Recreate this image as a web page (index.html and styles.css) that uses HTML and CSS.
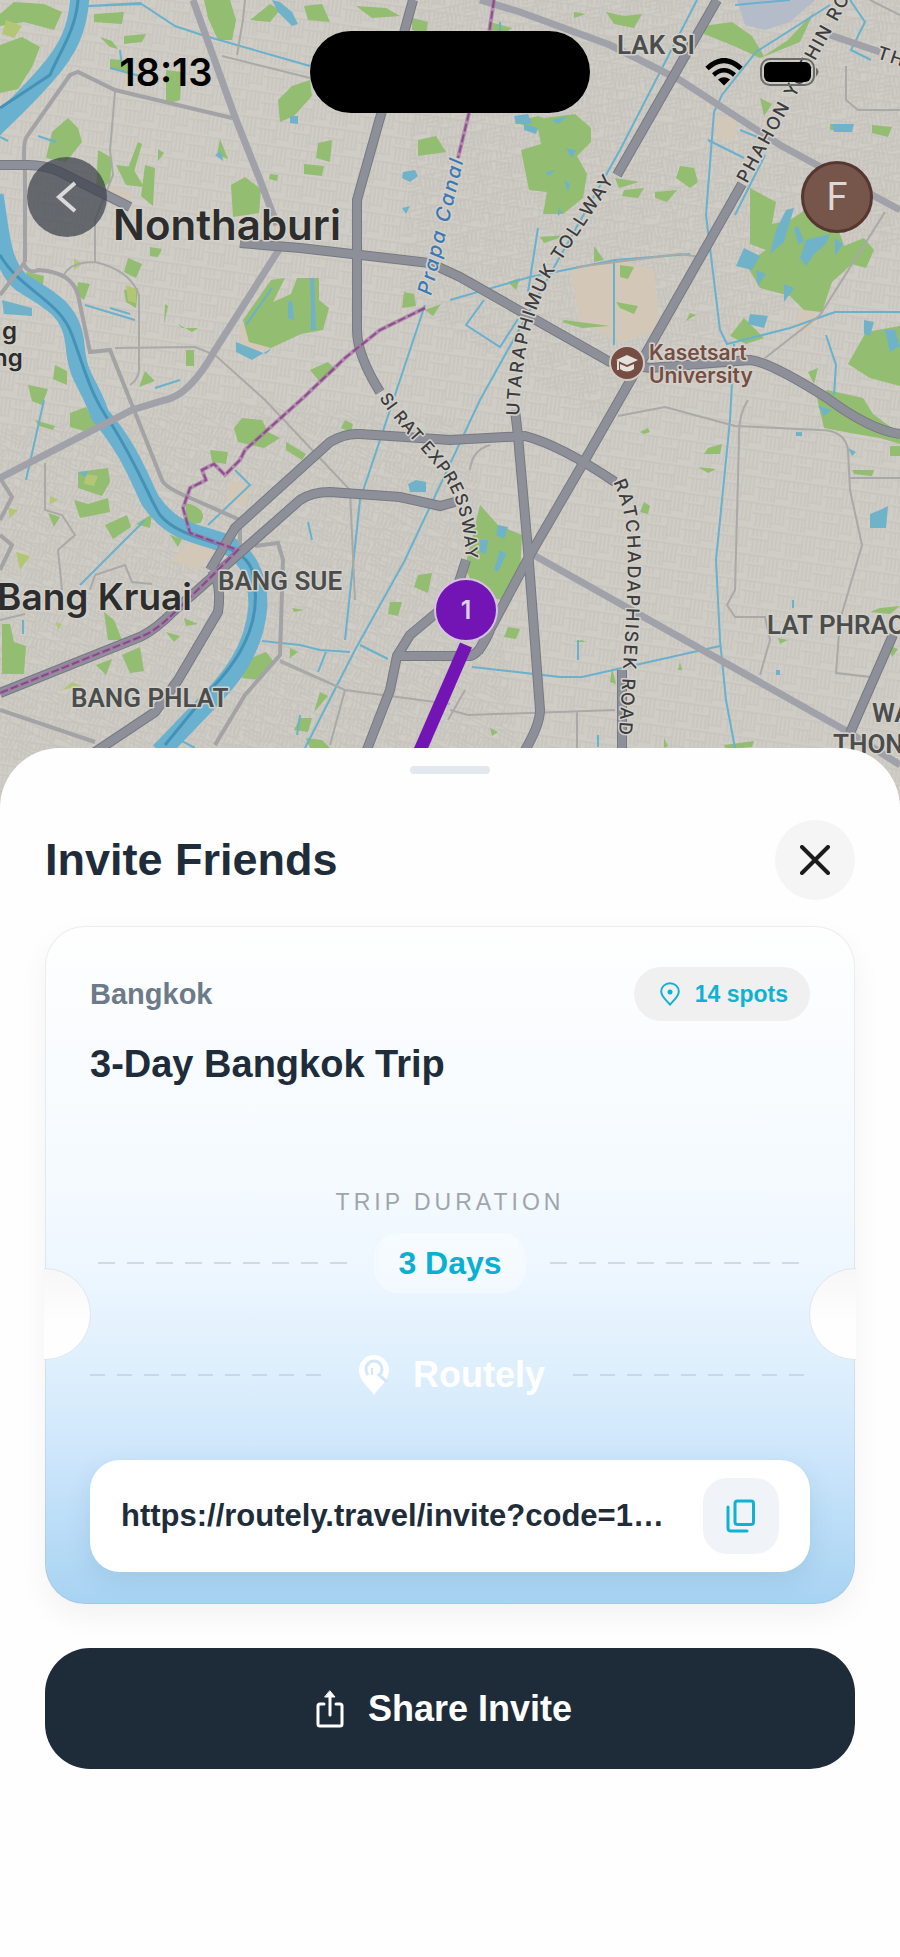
FILE: index.html
```html
<!DOCTYPE html>
<html lang="en">
<head>
    <meta charset="UTF-8">
    <meta name="viewport" content="width=device-width, initial-scale=1.0">
    <title>Routely - Invite Friends</title>
    <link rel="stylesheet" href="styles.css">
</head>
<body>
    <header class="map">
        <svg class="map-canvas" viewBox="0 0 900 830" preserveAspectRatio="xMidYMin slice" aria-label="Map of Bangkok">
            <defs>
                <!-- small streets -->
                <pattern id="streets-a" width="34" height="26" patternUnits="userSpaceOnUse" patternTransform="rotate(8)">
                    <path d="M0 3H34M0 13H20M20 3V26M5 13V26M9 13V26M13 13V26M17 13V26M24 3V20M28 3V20M32 3V20M20 21H34M4 3V10M8 3V10M12 3V10"/>
                </pattern>
                <pattern id="streets-b" width="30" height="32" patternUnits="userSpaceOnUse" patternTransform="rotate(-12)">
                    <path d="M0 4H30M14 4V32M0 9H14M0 13H14M0 17H14M0 21H14M14 26H30M18 4V22M22 4V22M26 4V22M4 24V32M8 24V32"/>
                </pattern>
                <pattern id="streets-c" width="32" height="30" patternUnits="userSpaceOnUse" patternTransform="rotate(28)">
                    <path d="M0 2H32M10 2V30M10 16H32M2 6V28M6 6V28M14 6V16M18 2V12M22 6V16M26 2V12M14 20H32M14 24H32"/>
                </pattern>
                <path id="tollway-path" d="M519 416C522 345 534 310 552 275L622 168"/>
                <path id="phahon-path" d="M747 184L870 -38"/>
                <path id="sirat-path" d="M379 398C400 430 425 450 444 478C460 503 464 525 466 562"/>
                <path id="ratcha-path" d="M613 482C632 520 628 560 626 620L618 752"/>
                <path id="prapa-path" d="M431 296L468 142"/>
            </defs>
            <rect class="land" width="900" height="830"/>
            <g class="streets">
                <rect width="900" height="830" fill="url(#streets-a)"/>
                <path d="M420 0H900V240L600 420L400 300Z" fill="url(#streets-b)"/>
                <path d="M0 430L230 400L470 420L520 760H0Z" fill="url(#streets-c)"/>
            </g>
            <path class="sand" d="M110 185l22 8-4 14-18-4zM240 325l30-30 20 6-10 45-38 8zM230 480l20 5-4 22-20-8zM170 560l20-18 28 6-20 22zM570 270l50-10 34 10 6 60-40 12-40-20zM715 115l22 4-3 22-18-4zM800 300l18 4-8 30-14-6z"/>
            <path class="lake" d="M737 0H815L790 22L765 30L745 25Z"/>
            <g class="green">
                <path d="M0 45l22-8 18 10-8 20-14 22-18 4zM0 14l14-12 30 2 18 8-8 18-30-8-24 4zM94 14l30-2-2 12-28-2zM100 37l12 4 6 8-8-2zM110 59l22 2-4 12-18-4zM124 36l22-2-4 8-18 2zM166 70l16 2-2 28-14 4z"/>
                <path d="M204 0h26l6 20-4 20-14 0-10-22zM250 20l20-16 10 6-10 12zM304 6l18-2 8 18-22-2zM356 6l30 2 14 8-28 2zM412 18l16 4-2 12-14-4zM278 100l14-14 18-6 2 16-18 20-14 6zM318 143l14-3-2 22-14-4zM304 164l20 2-2 10-18-2zM418 140l18-4 10 16-28 4zM270 174l8 1-1 6-8-2z"/>
                <path d="M52 132l16-14 10 10 4 14-16 20-20-4zM98 150l14 8-2 24-14 12zM116 165l16 2 12 20-18-2zM138 142l4 2-8 28-6-4zM145 165l10 3-2 38-12-10zM158 149l6 4-6 8zM217 155l3-16 8 20zM231 185l14-8 16 12-2 24-26 4zM150 247l12 2-4 8-8-1zM128 258l14 6-6 14-12-6zM26 272l18 4-2 16-14-6zM78 282l12 2-6 16-8-6zM124 290l14-2-2 20-10-6z"/>
                <path d="M243 320l28-40 14-2-12 24 18-8 6-16h22v22l10 8-6 22-22 4-30 14-22-6zM186 350h8v16h-8zM145 371l10 10-16 6zM404 292l10 2 2 12-14 2zM178 324l4 4 16 0-6 4zM165 304l3 2-4 18zM310 370l18-8 8 8-16 12zM425 310l16-6-8 12zM28 385l20 4-6 16-10-4zM55 365l12 6 0 14-14-6z"/>
                <path d="M70 413l16-6 10 18-12 6-14-4zM35 420l20 6-2 4-14-4zM234 428l8-10 20 2 6 12 12 6-16 10-26-6zM210 450l18 2-2 12-14-2zM286 442l20 12-4 6-16-10zM78 472l30-4 2 14-8 14-24-8zM74 500l14 4 20-6 2 14-30 6zM105 525l22-10 4 12-18 12zM186 503c18 4 20 14 14 20l-14 2zM136 524l16-10-2 14zM48 513l12 4-6 10zM345 420l8 4-2 8-10-4zM170 535l12 4-4 8z"/>
                <path d="M2 624l8 0 4 18 12 4-2 28-22 0zM104 612l10 8 8 20-14 0zM122 655l18-8 4 24-14 2zM96 665l16-6-6 16zM184 618l14 6-12 2zM166 632l14 4-6 6zM246 660l20-8 8 10-14 18-18-2zM290 648l8 4-8 6zM320 692l8 4-14 16zM300 718l12 0-4 14-14-2zM418 575l14-2-4 20-14-6zM390 602l12 0-4 14-10-2zM292 608l12 2-10 2zM306 738l16 2 8 8-20 0z"/>
                <path d="M480 505l18 20 24 10-2 40-18 25-25-5-12-28zM545 118l30-4 16 14 0 14-14 14 10 18-4 24-20 16-20 0 4-22-18-2-8-40 20-6-4-20zM514 122l24-6 16 6-10 10zM606 12l18 4 18-2-8 14-20-4zM490 22l22 6-6 4-16-2zM574 12l12 2-12 4z"/>
                <path d="M680 166l14 2 4 14-8 6-14-10zM615 178l24 4-20 6zM624 190l20-2-6 10-16-2zM655 192l22-2-10 12-12-4zM594 246l10 14-10 2zM620 265l14 2-6 12-8-2zM540 237l28-2-24 8zM564 320l46 6-28 2-20-6zM616 302l22 4-4 8-14-6zM730 336l14-18 20 20-18 6zM690 313l6 2-10 6zM508 282l12-4-4 12z"/>
                <path d="M704 26l28-4 20 14 12 20 24-16 26-28-14 30-40 16-26-12-30-12zM760 98l12 6-8 12zM872 125l20 2-4 10-16-4zM830 124l20 0 2 6-22 0z"/>
                <path d="M750 188l26 14-4 22 18-4 24-16 10 12 12 6 8 24 20-8 10 12-8 18-14-4-20 18-10 30-18-2-14-14-30-8-14-24 20-14-16-6z"/>
                <path d="M866 332l34-6v60l-30-8-22-14zM808 372l10-4-4 16zM817 398l10-8 36 8 10 16 27 20v10l-20-6-24-4-32-6zM640 432l8-4 2 4-6 2zM708 448l14-4-2 10-16 0zM698 467l18 2-8 4zM644 502l6 4-2 8-8-2zM890 446h10v10h-10zM852 470l22 0-2 6-18-2z"/>
                <path d="M508 627l12 2-4 10-12-2zM582 640l4 2-12 0zM612 668l4 16-6-2zM880 608l20-2-10 8-20-2zM778 638l10 2-8 4zM888 645l10 4-6 8zM724 745l30-4-2 6-26 2zM490 728l8 4-6 4zM664 738l4 8-4 2zM680 662l2 8-4 0z"/>
            </g>
            <g class="olive">
                <path d="M6 20l16 6-8 12-12-4zM74 258l8 6-8 6zM126 285l10 4 0 14-8-2zM86 474l12 2-4 10-10-2zM16 552l14 4-10 14zM50 496l8 4-8 4zM72 682l10 4-20 4zM56 622l6 2-4 6zM8 508l10 2-8 8z"/>
            </g>
            <!-- canals and ponds -->
            <g class="canal">
                <path d="M88 6L140 3L175 26L202 35L310 66M120 50l2 16M110 68l30 8M38 136l18 6M0 137l8 4M90 6l52-2"/>
                <path d="M697 0L620 150L530 310L480 400L405 560L355 650L305 748"/>
                <path d="M735 5L790 0M830 5L756 52L722 95L714 112L706 215L720 330L727 344L790 328L835 312H900M850 0l15 22-14 28 20 10"/>
                <path d="M450 300L530 277L615 260L690 254M614 260V345M538 228L528 292M484 300l-18 25 34 22 18-28M734 344L730 420L724 480L716 560L720 640L726 700L735 748"/>
                <path d="M472 667L560 677H582L640 664L720 646M80 585L145 520M235 470L250 485L208 525M425 305L360 500L345 640M44 400L26 480"/>
                <path d="M262 641L300 645L320 650L350 652M326 652l-8 20M360 645l28 14M300 715l-3 20M85 305l50 15M110 308l20 6M180 380l-25 8M23 620v14M180 740l15 8M308 522l4 18M578 640v20M598 735v12M793 600v8M826 335l10 30-2 30"/>
                <path d="M246 325L272 288M312 278V330M765 155l-30 60M708 140l36 18M740 130l25 10M500 58l30 4M500 22v10"/>
            </g>
            <g class="pond">
                <path d="M272 0l8 2 12 10 6 12-6 2-14-14zM290 116l8 0 0 8-8-1zM403 172l12-2 3 6-8 6-8-4zM402 208l8-2-4 8zM215 155l6-4 2 10zM310 278l4 0 2 52-4 0zM288 302l4-2 2 20-6-2zM236 342l30 12 6-6-20 12-16-8zM2 300l30 8 0 8-28-2zM408 484l8-4 10 2 0 10-16 0zM78 473l10-2-2 6z"/>
                <path d="M514 116l14-2 4 10-16 0zM524 124l14 4-2 6-12-4zM552 120l16-4-10 8zM566 148l10 2-4 8zM564 180l6 4-2 8zM546 172l10-2-8 6zM558 208l4 4-4 4zM498 525l10 2-4 12-8-4zM480 540l8 0-2 14-6-2zM500 550l6 4-8 18-4-2z"/>
                <path d="M786 210l8-2-10 34-14 12 6-24zM794 228l4-2 6 16-6 2zM806 240l24-6-4 10-12 10-8 12-6-8zM744 248l16 8-8 14-16-4zM750 314l18 2-4 12-16-4zM784 284l10 4-10 14zM756 270l10 4-8 12zM835 238l8 6-8 12zM864 320l10 2-4 14-6-2zM885 330l10 0 5 16-10 6zM832 124l22 0-2 8-18 0zM880 510l8-4-2 22-16 0 0-14zM818 406l14 4-8 6zM848 448l8 4-4 4zM796 432l6 0 0 4-6 0zM776 670l4 0 0 5-4 0z"/>
            </g>
            <g class="river">
                <path d="M80 -5C78 30 68 50 45 76S10 112 -8 130"/>
                <path d="M-6 195C0 230 0 265 22 283C50 300 72 310 75 345S88 380 100 415C130 450 140 480 150 500C170 530 190 532 215 540C250 550 258 580 258 605C255 650 230 680 205 705L160 752"/>
            </g>
            <g class="river-line">
                <path d="M78 0C76 30 58 55 50 75L0 108"/>
                <path d="M0 255C20 290 60 300 72 335C85 370 90 395 112 425C140 470 150 500 160 515C185 545 240 538 252 570C265 620 240 660 210 690L165 745"/>
            </g>
            <!-- minor roads -->
            <g class="road-thin">
                <path d="M245 0l-2 20-6 35M222 56L310 78M115 92L110 150L113 175L95 220V262M64 275Q70 262 95 262Q130 270 139 295V370Q138 380 130 385M115 348L195 347L215 355L265 400L350 490L355 600M45 463V510L62 515L75 535L58 550L62 590M90 590L95 575L125 565L132 582L152 584M330 745L345 690L280 662M280 660L345 690L450 704M450 710L468 715L615 710M577 712V748"/>
                <path d="M618 416L665 407L735 426L820 430Q845 430 848 450L850 490L862 545L840 620L836 673L870 677M748 400Q738 415 739 440L735 590L727 605L735 617H765L770 640L760 675M576 267L680 254L700 257M885 212L820 315L765 358M850 478H900M846 66V100L858 110H900M900 15L870 0M470 470Q472 450 490 445M0 620L25 614M465 690L448 720"/>
            </g>
            <g class="road">
                <path d="M25 172V262M23 262Q28 275 38 270Q72 272 78 295L90 352L110 350L132 405L162 480Q165 488 195 500L240 520V545M25 172Q22 140 28 135L70 75L78 72L115 90L232 118M255 546L278 543L283 560L280 655L245 695L215 745M0 478L12 497L0 520M0 535L12 545L0 570M0 710L95 742M25 262L0 295"/>
            </g>
            <g class="road-mid">
                <path d="M193 0L235 117L260 180L277 225M280 248L215 350Q190 395 165 400L132 410L0 478M480 0L520 12L610 45L680 80L780 145L900 210M530 553L850 733L900 765M830 35L880 52"/>
            </g>
            <g class="road-case">
                <path d="M0 165H28Q45 165 60 172L130 207M240 243L300 248L430 263L460 277L610 362L650 368L750 360Q770 362 827 398Q870 430 900 434"/>
                <path d="M413 0L402 40L378 125L357 200V330Q357 355 380 392M466 560L458 585M440 610L410 635L397 656L390 690L366 752M397 656H470Q480 654 490 630"/>
                <path d="M717 0L617 175M515 410L518 436L528 550L540 710Q540 725 524 752M742 184L645 355L585 460L530 555L478 652"/>
                <path d="M210 570L235 528L330 442Q345 433 360 434L450 440L525 436Q560 445 615 482M622 670L622 752M0 693L140 637Q155 630 175 610L300 500Q312 492 330 492L400 497L440 506L455 502M212 570Q222 585 218 612L178 680L155 712L95 752M893 635L850 733"/>
            </g>
            <g class="road-main">
                <path d="M0 165H28Q45 165 60 172L130 207M240 243L300 248L430 263L460 277L610 362L650 368L750 360Q770 362 827 398Q870 430 900 434"/>
                <path d="M413 0L402 40L378 125L357 200V330Q357 355 380 392M466 560L458 585M440 610L410 635L397 656L390 690L366 752M397 656H470Q480 654 490 630"/>
                <path d="M717 0L617 175M515 410L518 436L528 550L540 710Q540 725 524 752M742 184L645 355L585 460L530 555L478 652"/>
                <path d="M210 570L235 528L330 442Q345 433 360 434L450 440L525 436Q560 445 615 482M622 670L622 752M0 693L140 637Q155 630 175 610L300 500Q312 492 330 492L400 497L440 506L455 502M212 570Q222 585 218 612L178 680L155 712L95 752M893 635L850 733"/>
            </g>
            <g class="border">
                <path d="M494 0L488 40M469 113L458 158M425 308L380 330L345 358L303 398L245 450L240 460L225 475L214 464L202 470L206 480L190 488L183 508L190 533L238 550L215 573L175 612Q155 632 140 637L0 693"/>
                <path class="border-dash" d="M494 0L488 40M469 113L458 158M425 308L380 330L345 358L303 398L245 450L240 460L225 475L214 464L202 470L206 480L190 488L183 508L190 533L238 550L215 573L175 612Q155 632 140 637L0 693"/>
            </g>
            <!-- place names -->
            <g class="label-city">
                <text class="city-lg" x="113" y="240">Nonthaburi</text>
                <text class="city-md" x="-3" y="610">Bang Kruai</text>
                <text class="city-sm" x="2" y="339">g</text>
                <text class="city-sm" x="-7" y="366">ng</text>
            </g>
            <g class="label-area">
                <text x="617" y="54">LAK SI</text>
                <text x="218" y="590">BANG SUE</text>
                <text x="71" y="707">BANG PHLAT</text>
                <text x="767" y="634">LAT PHRAO</text>
                <text x="872" y="722">WANG</text>
                <text x="833" y="753">THONGLANG</text>
            </g>
            <g class="label-road">
                <text><textPath href="#tollway-path">UTARAPHIMUK TOLLWAY</textPath></text>
                <text><textPath href="#phahon-path">PHAHON YOTHIN ROAD</textPath></text>
                <text class="road-sm"><textPath href="#sirat-path">SI RAT EXPRESSWAY</textPath></text>
                <text><textPath href="#ratcha-path">RATCHADAPHISEK ROAD</textPath></text>
                <text transform="translate(876 58) rotate(18)">THANON</text>
                <text class="water-name"><textPath href="#prapa-path">Prapa Canal</textPath></text>
            </g>
            <g class="poi">
                <circle cx="627" cy="363" r="17"/>
                <path class="poi-icon" d="M627 355l-11 5 11 5 11-5zM620 364v5q7 5 14 0v-5l-7 3zM617 361h2v9h-2z"/>
                <text x="649" y="360">Kasetsart</text>
                <text x="649" y="383">University</text>
            </g>
            <path class="route" d="M466 645L418 755"/>
            <g class="pin">
                <circle cx="466" cy="610" r="31"/>
                <text x="466" y="619">1</text>
            </g>
        </svg>

        <div class="status-bar">
            <span class="status-time">18:13</span>
            <span class="island"></span>
            <span class="status-icons">
                <svg width="38" height="28" viewBox="0 0 38 28" aria-hidden="true">
                    <path d="M2 10.500Q19-5.500 36 10.500" fill="none" stroke="#000" stroke-width="5"/>
                    <path d="M8.500 17Q19 7.500 29.500 17" fill="none" stroke="#000" stroke-width="4.500"/>
                    <path d="M13 21.500Q19 17 25 21.500L19 27.500Z"/>
                </svg>
                <svg width="60" height="28" viewBox="0 0 60 28" aria-hidden="true">
                    <rect x="1" y="1" width="53" height="26" rx="9" fill="none" stroke="#6b6b69" stroke-width="2"/>
                    <rect x="4" y="4" width="47" height="20" rx="6"/>
                    <path d="M56 9.500q5 4.500 0 9z" fill="#6b6b69"/>
                </svg>
            </span>
        </div>
        <nav class="map-nav">
            <button class="back-btn" type="button" aria-label="Back">
                <svg width="24" height="36" viewBox="0 0 24 36" aria-hidden="true">
                    <path d="M20 4L4 18L20 32"/>
                </svg>
            </button>
            <button class="avatar" type="button" aria-label="Profile">F</button>
        </nav>
    </header>

    <main class="sheet">
        <div class="handle"></div>
        <div class="sheet-header">
            <h1>Invite Friends</h1>
            <button class="close-btn" type="button" aria-label="Close">
                <svg width="30" height="30" viewBox="0 0 30 30" aria-hidden="true">
                    <path d="M2 2L28 28M28 2L2 28"/>
                </svg>
            </button>
        </div>

        <section class="ticket">
            <div class="ticket-top">
                <span class="city">Bangkok</span>
                <span class="spots">
                    <svg width="20" height="24" viewBox="0 0 20 24" aria-hidden="true">
                        <path d="M10 22.500C6 18 1.200 14.500 1.200 9.500A8.800 8.300 0 0 1 18.800 9.500C18.800 14.500 14 18 10 22.500Z"/>
                        <circle cx="10" cy="10" r="2.500"/>
                    </svg>
                    14 spots
                </span>
            </div>
            <h2>3-Day Bangkok Trip</h2>

            <p class="duration-label">TRIP DURATION</p>
            <div class="duration">
                <span class="dashes"></span>
                <strong>3 Days</strong>
                <span class="dashes"></span>
            </div>

            <div class="brand">
                <span class="dashes"></span>
                <svg width="30" height="40" viewBox="0 0 30 40" aria-hidden="true">
                    <path class="brand-pin" d="M15 40C10 32 0 26 0 15A15 15 0 0 1 30 15C30 26 20 32 15 40Z"/>
                    <path class="brand-loop" d="M9 20Q7 18 7 14A8 8 0 0 1 23 14Q23 18 20 20L28 27"/>
                    <path class="brand-stem" d="M13 13V20"/>
                </svg>
                <span class="brand-name">Routely</span>
                <span class="dashes"></span>
            </div>

            <div class="link-box">
                <span class="link-text">https://routely.travel/invite?code=1…</span>
                <button class="copy-btn" type="button" aria-label="Copy link">
                    <svg width="30" height="36" viewBox="0 0 30 36" aria-hidden="true">
                        <rect x="9" y="3" width="18.500" height="23.500" rx="2.500"/>
                        <path d="M2 9V30Q2 33 5 33H21"/>
                    </svg>
                </button>
            </div>
        </section>

        <button class="share-btn" type="button">
            <svg width="28" height="38" viewBox="0 0 28 38" aria-hidden="true">
                <path d="M8 14H4Q2 14 2 16V34Q2 36 4 36H24Q26 36 26 34V16Q26 14 24 14H20M14 25V5"/>
                <path class="arrow" d="M14 1L19 7H9Z"/>
            </svg>
            Share Invite
        </button>
    </main>
</body>
</html>
```
FILE: styles.css
```css
* {
    box-sizing: border-box;
}
body {
    margin: 0;
    background: #fefefe;
    color: #1f2d3b;
    font-family: "Liberation Sans", Arial, sans-serif;
}
h1, h2, p {
    margin: 0;
}
button {
    padding: 0;
    border: none;
    font-family: inherit;
    cursor: pointer;
}
svg {
    display: block;
    flex: none;
}

/* map */
.map {
    position: relative;
}
.map-canvas {
    width: 100%;
    height: 830px;
}
.land { fill: #cfcdc5; }
.streets { opacity: 0.38; }
pattern path {
    fill: none;
    stroke: #b0aeaa;
    stroke-width: 1;
}
.sand { fill: #d3c8b7; }
.lake { fill: #b4bcc9; }
.green { fill: #93bd70; }
.olive { fill: #b3c676; }
.pond { fill: #70b3c9; }
.canal path {
    fill: none;
    stroke: #69b1cd;
    stroke-width: 2;
}
.river path {
    fill: none;
    stroke: #69b1cf;
    stroke-width: 19;
}
.river-line path {
    fill: none;
    stroke: #4691b6;
    stroke-width: 3;
}
.road-thin path {
    fill: none;
    stroke: #a9a9a8;
    stroke-width: 2;
}
.road path {
    fill: none;
    stroke: #a3a3a6;
    stroke-width: 4;
}
.road-mid path {
    fill: none;
    stroke: #a0a1a9;
    stroke-width: 7;
}
.road-case path {
    fill: none;
    stroke: #777982;
    stroke-width: 10;
}
.road-main path {
    fill: none;
    stroke: #8e9099;
    stroke-width: 8;
}
.border path {
    fill: none;
    stroke: #a673a5;
    stroke-width: 4;
    opacity: 0.7;
}
.border .border-dash {
    stroke: #7d337f;
    stroke-width: 2;
    stroke-dasharray: 8 3;
}
.map-canvas text {
    paint-order: stroke;
    stroke: #d3d1ca;
    stroke-width: 3px;
    stroke-linejoin: round;
}
.label-city {
    fill: #2d2d2d;
    font-family: Inter, sans-serif;
    font-weight: 600;
}
.city-lg { font-size: 42px; }
.city-md { font-size: 37px; }
.city-sm { font-size: 24px; }
.label-area {
    fill: #4b4d4d;
    font-family: Roboto, sans-serif;
    font-size: 26px;
    font-weight: 600;
}
.label-road {
    fill: #3c3c3f;
    font-family: Inter, sans-serif;
    font-size: 18px;
    font-weight: 500;
    letter-spacing: 2px;
}
.label-road .road-sm {
    font-size: 17px;
    letter-spacing: 1px;
}
.label-road .water-name {
    fill: #3c78b4;
    font-size: 20px;
    font-style: italic;
}
.poi {
    fill: #754d43;
    font-family: Inter, sans-serif;
    font-size: 21px;
    font-weight: 600;
}
.poi circle {
    stroke: #d3cbc3;
    stroke-width: 2;
}
.poi-icon { fill: #e5e0dc; }
.route {
    fill: none;
    stroke: #7315b5;
    stroke-width: 13;
}
.pin circle {
    fill: #7315b5;
    stroke: #d5c4df;
    stroke-width: 2;
}
.map-canvas .pin text {
    fill: #dcd0e4;
    stroke: none;
    font-family: Inter, sans-serif;
    font-size: 25px;
    font-weight: 600;
    text-anchor: middle;
}

/* phone status bar and buttons, over the map */
.status-bar {
    position: absolute;
    top: 31px;
    left: 0;
    right: 0;
    display: grid;
    grid-template-columns: 1fr 280px 1fr;
    align-items: center;
    color: #000;
}
.status-time {
    padding-left: 22px;
    text-align: center;
    font-family: Inter, sans-serif;
    font-size: 38px;
    font-weight: 600;
}
.island {
    height: 82px;
    border-radius: 41px;
    background: #000;
}
.status-icons {
    display: flex;
    justify-content: flex-end;
    gap: 17px;
    padding-right: 80px;
}
.map-nav {
    position: absolute;
    top: 157px;
    left: 0;
    right: 0;
    display: flex;
    justify-content: space-between;
    align-items: center;
    padding: 0 27px;
}
.back-btn {
    display: flex;
    align-items: center;
    justify-content: center;
    width: 80px;
    height: 80px;
    border-radius: 50%;
    background: rgba(60, 65, 75, 0.72);
}
.back-btn path {
    fill: none;
    stroke: #dadada;
    stroke-width: 4;
}
.avatar {
    width: 72px;
    height: 72px;
    border: 3px solid #55372f;
    border-radius: 50%;
    background: #76554b;
    color: #ddd8d5;
    font-family: Roboto, sans-serif;
    font-size: 38px;
}

/* bottom sheet */
.sheet {
    position: relative;
    margin-top: -82px;
    padding: 18px 45px 44px;
    border-radius: 60px 60px 0 0;
    background: #fefefe;
}
.handle {
    width: 80px;
    height: 8px;
    margin: 0 auto 46px;
    border-radius: 4px;
    background: #e3e7ee;
}
.sheet-header {
    display: flex;
    align-items: center;
    justify-content: space-between;
    margin-bottom: 26px;
}
h1 {
    font-size: 45px;
    line-height: 72px;
}
.close-btn {
    display: flex;
    align-items: center;
    justify-content: center;
    width: 80px;
    height: 80px;
    border-radius: 50%;
    background: #f5f5f5;
}
.close-btn path {
    stroke: #1c1c1c;
    stroke-width: 4;
    stroke-linecap: round;
}

/* ticket card */
.ticket {
    position: relative;
    padding: 40px 44px 31px;
    border: 1px solid rgba(140, 140, 140, 0.15);
    border-radius: 40px;
    background: linear-gradient(#fefefe 0%, #f4faff 38%, #eef7ff 50%, #dceefc 67%, #cfe7fc 77%, #a7d3f2 100%);
    background-clip: border-box;
    background-origin: border-box;
    box-shadow: 0 12px 30px rgba(0, 0, 0, 0.05);
}
.ticket::before,
.ticket::after {
    content: "";
    position: absolute;
    top: 341px;
    width: 90px;
    height: 90px;
    border: 1px solid #e2e6ea;
    border-radius: 50%;
    background: linear-gradient(#f7f7f7, #fefefe 60%);
}
.ticket::before {
    left: -47px;
    clip-path: inset(0 0 0 45px);
}
.ticket::after {
    right: -47px;
    clip-path: inset(0 45px 0 0);
}
.ticket-top {
    display: flex;
    align-items: center;
    justify-content: space-between;
}
.city {
    color: #6d7a88;
    font-size: 29px;
    font-weight: bold;
}
.spots {
    display: flex;
    align-items: center;
    gap: 15px;
    height: 54px;
    padding: 0 22px 0 26px;
    border-radius: 27px;
    background: #f0f0f0;
    color: #0fb2d3;
    font-size: 23px;
    font-weight: bold;
}
.spots path {
    fill: none;
    stroke: #0fb2d3;
    stroke-width: 2;
}
.spots circle {
    fill: #0fb2d3;
}
h2 {
    margin-top: 20px;
    font-size: 38px;
    line-height: 46px;
}
.duration-label {
    margin-top: 100px;
    color: #9fa5ac;
    font-size: 23px;
    line-height: 30px;
    letter-spacing: 4px;
    text-align: center;
}
.duration {
    display: flex;
    align-items: center;
    gap: 24px;
    margin-top: 16px;
    padding: 0 8px;
}
.dashes {
    flex: 1;
    height: 2px;
    background: repeating-linear-gradient(90deg, #cfdae3 0 17px, transparent 17px 29px);
}
.duration strong {
    padding: 0 24px;
    border-radius: 24px;
    background: rgba(255, 255, 255, 0.4);
    color: #08b0d2;
    font-size: 32px;
    line-height: 60px;
}
.brand {
    display: flex;
    align-items: center;
    gap: 24px;
    margin-top: 54px;
    color: #fff;
}
.brand .dashes {
    background: repeating-linear-gradient(90deg, #c7d8e6 0 15px, transparent 15px 27px);
}
.brand svg {
    margin-left: 8px;
}
.brand-pin {
    fill: #fff;
}
.brand-loop {
    fill: none;
    stroke: #d3e7f8;
    stroke-width: 3;
}
.brand-stem {
    stroke: #d3e7f8;
    stroke-width: 2;
}
.brand-name {
    margin-right: 4px;
    font-size: 36px;
    font-weight: bold;
    line-height: 56px;
}
.link-box {
    display: flex;
    align-items: center;
    gap: 30px;
    margin-top: 57px;
    padding: 18px 31px;
    border-radius: 30px;
    background: #fff;
    box-shadow: 0 8px 24px rgba(60, 110, 150, 0.14);
}
.link-text {
    flex: 1;
    min-width: 0;
    overflow: hidden;
    font-size: 31px;
    font-weight: bold;
    line-height: 40px;
    text-overflow: ellipsis;
    white-space: nowrap;
}
.copy-btn {
    display: flex;
    align-items: center;
    justify-content: center;
    width: 76px;
    height: 76px;
    border-radius: 24px;
    background: #f0f4f8;
}
.copy-btn svg {
    fill: none;
    stroke: #0fb2d3;
    stroke-width: 3;
    stroke-linecap: round;
}

.share-btn {
    display: flex;
    align-items: center;
    justify-content: center;
    gap: 24px;
    width: 100%;
    height: 121px;
    margin-top: 44px;
    padding-right: 12px;
    border-radius: 45px;
    background: #1e2c3a;
    color: #fff;
    font-size: 36px;
    font-weight: bold;
}
.share-btn svg {
    fill: none;
    stroke: #fff;
    stroke-width: 3;
    stroke-linecap: round;
}
.share-btn .arrow {
    fill: #fff;
    stroke-width: 1;
}
```
